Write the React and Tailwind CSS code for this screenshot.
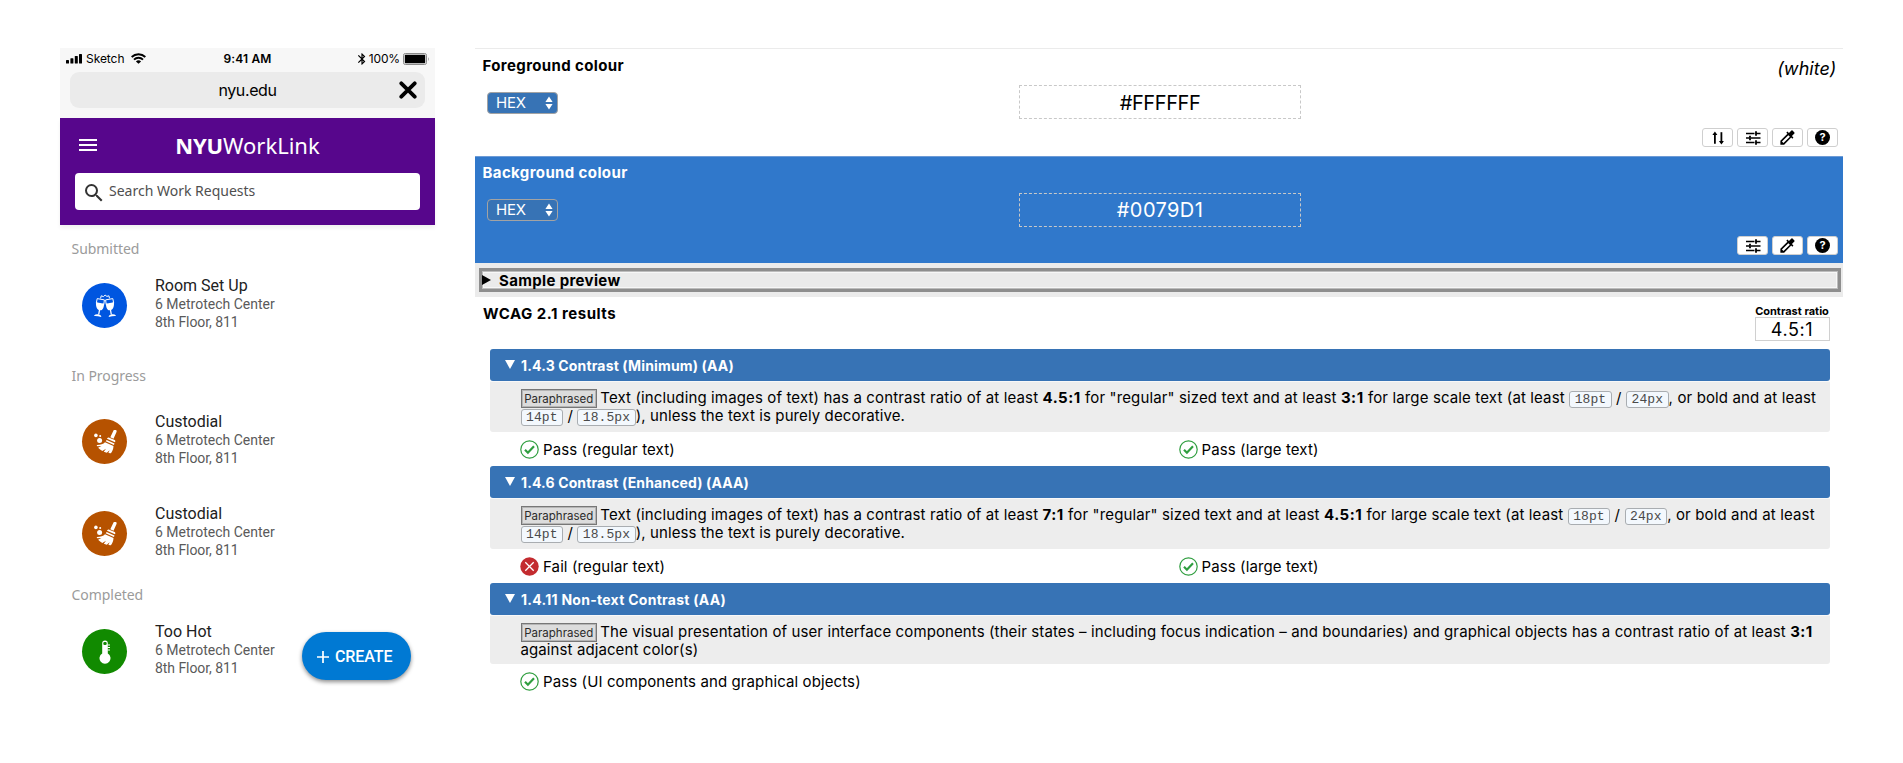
import React from "react";
import { MdMenu, MdSearch, MdAdd, MdBluetooth, MdColorize } from "react-icons/md";

/* ---------- icons ---------- */

function GlassesIcon() {
  return (
    <svg viewBox="0 0 24 24" className="h-6 w-6" fill="none">
      <path d="M7.600 4.400l.6-2.600 2.200.8 1.700-1.500 1.800 1.300 2-.6.6 2.500" stroke="white" strokeWidth="1" />
      <g stroke="white" strokeWidth="1">
        <path d="M4.200 4.600l7.200 1.300-.6 4.600-7.500-1.400z" />
        <path d="M19.800 4.600l-7.200 1.300.6 4.600 7.500-1.400z" />
      </g>
      <path d="M3.100 8.600c2.600-.9 4.900 1.300 8 .8-.1 4.300-1.600 7.300-4.300 6.900C4 15.900 2.600 12.600 3.100 8.600z" fill="white" />
      <path d="M20.900 8.600c-2.600-.9-4.900 1.300-8 .8.1 4.300 1.600 7.300 4.300 6.900 2.800-.4 4.200-3.700 3.700-7.700z" fill="white" />
      <path d="M6.500 16l-.8 4.500M17.500 16l.8 4.500" stroke="white" strokeWidth="1.300" />
      <path d="M1.300 21.300c1.500-1.600 5.600-1.100 7 .9l-.2.700c-2.400-.7-4.600-1-6.900-.9z" fill="white" />
      <path d="M22.700 21.300c-1.500-1.600-5.600-1.100-7 .9l.2.700c2.400-.7 4.600-1 6.900-.9z" fill="white" />
    </svg>
  );
}

function BroomIcon() {
  return (
    <svg viewBox="0 0 24 24" className="h-6 w-6" fill="white">
      <circle cx="2.900" cy="5.400" r="1.800" />
      <circle cx="7.200" cy="5.900" r="1" />
      <circle cx="6.600" cy="10.400" r="2.500" />
      <path d="M20.500.6c.4-.9 1.400-1.200 2.200-.8.8.4 1.200 1.300.8 2.200l-3 6.800-3.200-1.500z" />
      <path d="M16.300 7.700l5.400 2.400c.6.3.8.9.6 1.500l-.3.600-8-3.500.4-.6c.4-.6 1.200-.7 1.900-.4z" />
      <path d="M13.600 9.900l7.900 3.500-.6 1.600-8.200-3.700z" />
      <path d="M12 12.200l8.500 3.900c-.1 3-1.100 5.400-2.600 7.200l-2.500-.3 1.200-2.800-2.800 2.500c-1-.2-2-.6-3-1l2.200-3-3.700 2.200c-1.500-.8-2.900-1.900-4.200-3.200l3.300-1.600-4.100.2-.7-1.300c3.500.1 6.700-1 8.400-2.800z" />
    </svg>
  );
}

function ThermometerIcon() {
  return (
    <svg viewBox="0 0 14 24" className="h-6 w-3.5" fill="none">
      <path d="M4.200 13.500V3.400a2.800 2.800 0 0 1 5.600 0v10.100a5.500 5.500 0 1 1-5.600 0z" fill="white" />
      <rect x="5.300" y="2" width="3.400" height="3" rx="1.200" fill="#118a00" />
      <path d="M9.500 5h2.500M9.500 7.500h2.500M9.500 10h2.500" stroke="white" strokeWidth="1" />
    </svg>
  );
}

function SwapIcon() {
  return (
    <svg viewBox="0 0 12 14" className="h-3.5 w-3" fill="none" stroke="black" strokeWidth="1.800">
      <path d="M2.900 12.800V2" />
      <path d="M.4 4L2.900.6 5.400 4z" fill="black" stroke="none" />
      <path d="M9.400 1.200V12" />
      <path d="M6.900 10l2.500 3.400 2.500-3.400z" fill="black" stroke="none" />
    </svg>
  );
}

function SlidersIcon() {
  return (
    <svg viewBox="0 0 16 14" className="h-3.5 w-4" fill="none" stroke="black" strokeWidth="1.300">
      <path d="M1 2.500h8.500M11 2.500h4.500M1 7h3.500M6 7h9.500M1 11.500h8.500M11 11.500h4.500" />
      <path d="M11 .3v4.400M5 4.800v4.400M11 9.300v4.400" strokeWidth="1.800" />
    </svg>
  );
}

function HelpIcon() {
  return (
    <span className="flex h-[15px] w-[15px] items-center justify-center rounded-full bg-black text-[11px] leading-[15px] font-bold text-white">
      ?
    </span>
  );
}

function SignalIcon() {
  return (
    <svg viewBox="0 0 16 10" className="h-2.5 w-4" fill="black">
      <rect x="0" y="6" width="3" height="3.500" rx=".6" />
      <rect x="4.400" y="4.200" width="3" height="5.300" rx=".6" />
      <rect x="8.800" y="2" width="3" height="7.500" rx=".6" />
      <rect x="13" y="0" width="3" height="9.500" rx=".6" />
    </svg>
  );
}

function WifiIcon() {
  return (
    <svg viewBox="0 0 14 10" className="h-[11px] w-[15px]" fill="none" stroke="black" strokeWidth="1.800">
      <path d="M.6 3.600a9.200 9.200 0 0 1 12.800 0" />
      <path d="M2.800 6a6 6 0 0 1 8.400 0" />
      <path d="M4.600 7.900a3.400 3.400 0 0 1 4.800 0L7 10z" fill="black" stroke="none" />
    </svg>
  );
}

function BatteryIcon() {
  return (
    <svg viewBox="0 0 27 12" className="h-3 w-[27px]" fill="none">
      <rect x=".5" y=".5" width="23" height="11" rx="1.800" stroke="#8a8a8a" />
      <rect x="1.800" y="1.800" width="20.400" height="8.400" rx=".6" fill="black" />
      <path d="M25 4.200c.9.400.9 3.200 0 3.600z" fill="#8a8a8a" />
    </svg>
  );
}

function PassIcon() {
  return (
    <svg viewBox="0 0 19 19" className="h-[19px] w-[19px] shrink-0" fill="none">
      <circle cx="9.500" cy="9.500" r="8.700" stroke="#2f9e3f" strokeWidth="1.200" />
      <path d="M5 9.800l2.900 2.900 6.100-6.400" stroke="#2f9e3f" strokeWidth="2.200" />
    </svg>
  );
}

function FailIcon() {
  return (
    <svg viewBox="0 0 19 19" className="h-[19px] w-[19px] shrink-0" fill="none">
      <circle cx="9.500" cy="9.500" r="9.200" fill="#c32b2f" />
      <path d="M5.300 5.300l8.400 8.400M13.700 5.300l-8.400 8.400" stroke="white" strokeWidth="1.300" />
    </svg>
  );
}

/* ---------- phone ---------- */

function SectionLabel({ children }) {
  return (
    <div className="h-5 pl-[11.500px] font-['Noto_Sans',sans-serif] text-sm leading-5 tracking-[-0.05px] text-[#9b9b9b]">
      {children}
    </div>
  );
}

function Request({ title, tone, icon }) {
  return (
    <div className="flex h-14 items-start pl-[22px] font-[Roboto,sans-serif]">
      <div className={`mt-[7px] flex h-[45px] w-[45px] items-center justify-center rounded-full ${tone}`}>{icon}</div>
      <div className="ml-[28px] whitespace-nowrap">
        <div className="text-base leading-5 text-[#212121]">{title}</div>
        <div className="-mt-px text-sm leading-[18px] text-[#5a5a5a]">6 Metrotech Center</div>
        <div className="text-sm leading-[18px] tracking-[-0.06px] text-[#5a5a5a]">8th Floor, 811</div>
      </div>
    </div>
  );
}

function Phone() {
  return (
    <div className="relative w-[375px] shrink-0">
      <div className="h-[70px] bg-[#f7f7f7] px-2.5">
        <div className="grid h-6 grid-cols-3 items-center pb-[3px] font-[Inter,sans-serif] text-xs text-black">
          <div className="-ml-1 flex items-center">
            <SignalIcon />
            <span className="ml-1 tracking-[-0.05px]">Sketch</span>
            <span className="ml-[7px]"><WifiIcon /></span>
          </div>
          <div className="text-center font-semibold tracking-[0.15px]">9:41 AM</div>
          <div className="-mr-[5px] flex items-center justify-end">
            <MdBluetooth className="h-[14px] w-[14px]" />
            <span className="mr-[3px] tracking-[-0.15px]">100%</span>
            <BatteryIcon />
          </div>
        </div>
        <div className="relative flex h-9 items-center justify-center rounded-[9px] bg-[#ebebeb]">
          <span className="font-[Inter,sans-serif] text-base leading-5 tracking-[-0.4px] text-black">nyu.edu</span>
          <svg viewBox="0 0 18 18" className="absolute top-[9px] right-2 h-[18px] w-[18px]" fill="none" stroke="black" strokeWidth="3.800" strokeLinecap="round">
            <path d="M2.300 2.300l13.400 13.400M15.700 2.300L2.300 15.700" />
          </svg>
        </div>
      </div>

      <div className="h-[107px] bg-[#57068c] px-[15px] font-['Noto_Sans',sans-serif] shadow-[0_3px_4px_rgba(0,0,0,0.06)]">
        <div className="grid h-[55px] grid-cols-[24px_1fr_24px] items-center">
          <MdMenu className="-mt-px ml-px h-6 w-6 text-white" />
          <div className="-mt-[2px] text-center text-[22px] leading-[30px] text-white">
            <b className="font-bold tracking-[-0.2px]">NYU</b>WorkLink
          </div>
        </div>
        <div className="flex h-[37px] items-center rounded bg-white pl-[7px]">
          <MdSearch className="mt-[2px] h-6 w-6 text-[#333]" />
          <span className="-mt-px ml-[3px] text-sm leading-5 text-[#4f4f4f]">Search Work Requests</span>
        </div>
      </div>

      <div className="pt-[14px]">
        <SectionLabel>Submitted</SectionLabel>
        <div className="h-[17px]" />
        <Request title="Room Set Up" tone="bg-[#0056e0]" icon={<GlassesIcon />} />
        <div className="h-[34px]" />
        <SectionLabel>In Progress</SectionLabel>
        <div className="h-[26px]" />
        <Request title="Custodial" tone="bg-[#b65200]" icon={<BroomIcon />} />
        <div className="h-9" />
        <Request title="Custodial" tone="bg-[#b65200]" icon={<BroomIcon />} />
        <div className="h-[25px]" />
        <SectionLabel>Completed</SectionLabel>
        <div className="h-[17px]" />
        <Request title="Too Hot" tone="bg-[#118a00]" icon={<ThermometerIcon />} />
      </div>

      <button className="absolute top-[584px] left-[242px] flex h-12 w-[109px] items-center rounded-full bg-[#0079d3] pl-[12px] text-white shadow-[0_2px_4px_rgba(0,0,0,0.45)]">
        <MdAdd className="mt-0.5 h-[18px] w-[18px] scale-115" />
        <span className="mt-px ml-[3px] font-[Roboto,sans-serif] text-base font-medium tracking-[-0.080px]">CREATE</span>
      </button>
    </div>
  );
}

/* ---------- contrast analyser ---------- */

function ToolButton({ children }) {
  return (
    <button className="flex h-full w-[31px] items-center justify-center rounded-[3px] border border-[#cfcfcf] bg-white text-black">
      {children}
    </button>
  );
}

function FormatSelect() {
  return (
    <div className="flex h-[22px] w-[70.500px] items-center justify-between rounded border border-[#a3a3a3] bg-[#3773b5] pr-1 pl-2 text-[15px] leading-5 tracking-[-0.2px] text-white">
      HEX
      <svg viewBox="0 0 8 14" className="h-3.5 w-2" fill="white">
        <path d="M.4 5.900L4 .4l3.600 5.500zM.4 8.100L4 13.600l3.600-5.500z" />
      </svg>
    </div>
  );
}

function ColourPanel({ title, value, name, swap, tone, rowTone, valueTone }) {
  return (
    <section className={`border-t pr-[5px] pl-2 ${tone}`}>
      <div className="flex h-[29px] justify-between">
        <h2 className="-ml-[0.500px] text-[15px] leading-5 font-bold tracking-[0.38px]">{title}</h2>
        {name && <em className="mt-px mr-[1.500px] text-lg leading-6 tracking-[0.080px]">{name}</em>}
      </div>
      <div className={`grid h-[34px] grid-cols-[536px_282px_1fr] items-center ${rowTone}`}>
        <div className={`pl-1 ${valueTone}`}><FormatSelect /></div>
        <div className={`flex h-[34px] items-center justify-center border border-dashed border-[#c8c8c8] text-xl leading-6 ${valueTone}`}>{value}</div>
      </div>
      <div className="mt-[9px] flex h-[19px] justify-end gap-1">
        {swap && <ToolButton><SwapIcon /></ToolButton>}
        <ToolButton><SlidersIcon /></ToolButton>
        <ToolButton><MdColorize className="h-[19px] w-[19px] shrink-0" /></ToolButton>
        <ToolButton><HelpIcon /></ToolButton>
      </div>
    </section>
  );
}

function Badge() {
  return (
    <span className="-my-1 mr-[3.300px] inline-block h-[19px] w-[76.500px] border border-[#777] bg-[#dcdcdc] pt-px text-center text-[11.500px] leading-4 tracking-normal text-[#2b2b2b] outline-1 -outline-offset-2 outline-[#b5b5b5]">
      Paraphrased
    </span>
  );
}

function Size({ children }) {
  return (
    <code className="-my-1 inline-block h-[17px] rounded-[3px] border border-[#a9adb1] bg-[#f3f8fd] px-[4.500px] font-['Liberation_Mono',monospace] text-[13px] leading-[15px] tracking-[0.100px] text-[#4a4a4a]">
      {children}
    </code>
  );
}

function Criterion({ title, titleTone, children, results }) {
  return (
    <section>
      <h3 className={`flex h-8 items-center rounded-[3px] bg-[#3773b5] pt-px pl-[15px] text-sm font-bold text-white ${titleTone}`}>
        <svg viewBox="0 0 10 9" className="-mt-0.5 mr-[6px] h-[9px] w-2.5" fill="white"><path d="M0 0h10L5 9z" /></svg>
        {title}
      </h3>
      <div className="rounded-b-[3px] border-t border-[#f8f8f8] bg-[#ededed] pl-[30.500px] whitespace-nowrap">{children}</div>
      <div className="grid h-[34px] grid-cols-[658.500px_1fr] items-center pl-[30px]">
        {results.map(([ok, label]) => (
          <div key={label} className="flex items-center">
            {ok ? <PassIcon /> : <FailIcon />}
            <span className="mt-px ml-[4px] leading-5 tracking-[0.110px]">{label}</span>
          </div>
        ))}
      </div>
    </section>
  );
}

function SizedText({ regular, large }) {
  return (
    <div className="pt-[7px] pb-[7px] leading-[18px]">
      <div className="tracking-[0.133px]">
        <Badge />
        Text (including images of text) has a contrast ratio of at least <b className="tracking-[0.500px]">{regular}</b> for "regular" sized text and at least <b className="tracking-[0.500px]">{large}</b> for large scale text (at least <Size>18pt</Size> / <Size>24px</Size>, or bold and at least
      </div>
      <div><Size>14pt</Size> / <Size>18.5px</Size>), unless the text is purely decorative.</div>
    </div>
  );
}

function Analyser() {
  return (
    <div className="ml-10 w-[1368px] shrink-0 font-[Inter,sans-serif] text-[15px] text-black">
      <ColourPanel title="Foreground colour" value="#FFFFFF" name="(white)" swap tone="h-[108px] border-[#ebebeb] bg-white pt-[7px]" valueTone="pt-[2px] tracking-[-0.400px]" />
      <ColourPanel title="Background colour" value="#0079D1" tone="h-[107px] border-[#6d9bd6] bg-[#3078cb] pt-[6px] text-white" rowTone="mt-px" valueTone="tracking-[0.400px]" />

      <div className="h-[34px] bg-[#ebebeb] py-[5px] pr-0.5 pl-1">
        <div className="h-6 border-[3px] border-[#8e8e8e]">
          <div className="flex h-full items-center border border-[#bdbdbd] inset-shadow-[0_0_0_1px_#f7f7f7]">
            <svg viewBox="0 0 9 10" className="-ml-px h-2.5 w-[9px]"><path d="M0 0l9 5-9 5z" /></svg>
            <h2 className="mt-0.5 ml-2 leading-4 font-bold tracking-[0.350px]">Sample preview</h2>
          </div>
        </div>
      </div>

      <div className="flex h-[52px] justify-between pt-[7px] pr-[13.500px] pl-2">
        <h2 className="leading-5 font-bold tracking-[0.520px]">WCAG 2.1 results</h2>
        <div className="w-[75px] pt-px">
          <div className="text-center text-[11px] leading-3 font-bold whitespace-nowrap">Contrast ratio</div>
          <div className="flex h-6 items-center justify-center border border-[#d0d0d0] pt-0.5 text-lg leading-none tracking-[0.600px]">4.5:1</div>
        </div>
      </div>

      <div className="ml-[15px] w-[1339.500px] tracking-[0.100px]">
        <Criterion title="1.4.3 Contrast (Minimum) (AA)" titleTone="tracking-[0.150px]" results={[[true, "Pass (regular text)"], [true, "Pass (large text)"]]}>
          <SizedText regular="4.5:1" large="3:1" />
        </Criterion>
        <Criterion title="1.4.6 Contrast (Enhanced) (AAA)" titleTone="tracking-[0.130px]" results={[[false, "Fail (regular text)"], [true, "Pass (large text)"]]}>
          <SizedText regular="7:1" large="4.5:1" />
        </Criterion>
        <Criterion title="1.4.11 Non-text Contrast (AA)" titleTone="tracking-[0.270px]" results={[[true, "Pass (UI components and graphical objects)"]]}>
          <div className="pt-[7px] pb-[6px]">
            <div className="leading-[18px] tracking-[0.107px]">
              <Badge />
              The visual presentation of user interface components (their states – including focus indication – and boundaries) and graphical objects has a contrast ratio of at least <b className="tracking-[0.500px]">3:1</b>
            </div>
            <div className="leading-[17px]">against adjacent color(s)</div>
          </div>
        </Criterion>
      </div>
    </div>
  );
}

export default function App() {
  return (
    <main className="flex h-[763px] w-[1903px] items-start overflow-hidden bg-white pt-12 pl-[60px]">
      <Phone />
      <Analyser />
    </main>
  );
}
